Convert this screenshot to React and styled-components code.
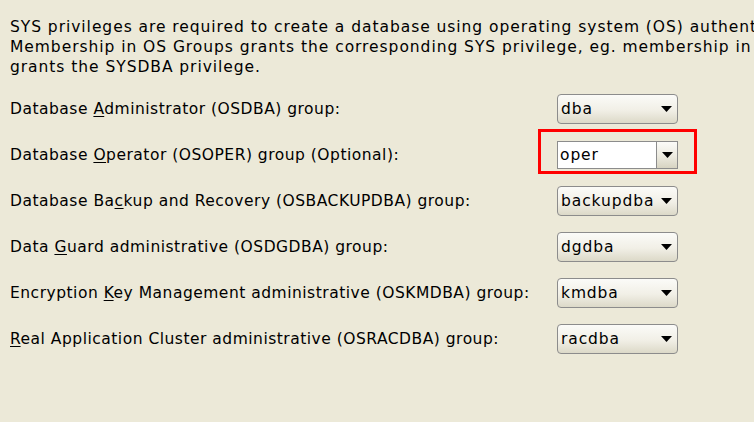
import React from "react";
import styled, { createGlobalStyle } from "styled-components";

const Global = createGlobalStyle`
  html, body {
    margin: 0;
    padding: 0;
    background: #ece9d8;
  }
  body {
    width: 754px;
    height: 422px;
    overflow: hidden;
    font-family: "DejaVu Sans", Verdana, sans-serif;
    font-size: 15.5px;
    color: #000;
  }
`;

const Page = styled.div`
  width: 754px;
  height: 422px;
  overflow: hidden;
  padding: 17px 0 0 10px;
  box-sizing: border-box;
`;

const Intro = styled.p`
  margin: 0 0 9px;
  white-space: nowrap;
  line-height: 20px;
  letter-spacing: 0.95px;
`;

const Form = styled.div`
  display: grid;
  grid-template-columns: 547px 121px;
  grid-auto-rows: 46px;
  align-items: center;
`;

const Label = styled.label`
  white-space: nowrap;
  letter-spacing: 0.5px;
  u { text-decoration: underline; text-underline-offset: 2px; }
`;

const Cell = styled.div`
  position: relative;
  width: 121px;
  height: 30px;
`;

const Highlight = styled.div`
  position: absolute;
  left: -19px;
  right: -19px;
  top: -11px;
  bottom: -4px;
  border: 3px solid #f00;
  box-sizing: border-box;
  pointer-events: none;
`;

const Combo = styled.div`
  display: flex;
  align-items: center;
  justify-content: space-between;
  height: 100%;
  box-sizing: border-box;
  border: 1px solid #8c8c8c;
  border-radius: 4px;
  background: linear-gradient(#fbfbf8, #f1efe6 55%, #dcd9c8);
  padding: 0 5px 0 3px;
  letter-spacing: 0.9px;
`;

const EditCombo = styled.div`
  display: flex;
  height: 28px;
  margin-top: 1px;
  box-sizing: border-box;
  border: 1px solid #8c8c8c;
`;

const Field = styled.div`
  flex: 1;
  background: #fff;
  display: flex;
  align-items: center;
  padding-left: 2px;
  letter-spacing: 0.9px;
  border-right: 1px solid #8c8c8c;
`;

const ArrowBtn = styled.div`
  width: 20px;
  display: flex;
  align-items: center;
  justify-content: center;
  background: linear-gradient(#fbfbf8, #eceadf 55%, #d7d4c2);
`;

const Arrow = () => (
  <svg width="11" height="6" viewBox="0 0 11 6">
    <path d="M0 0h11L5.5 6z" fill="#000" />
  </svg>
);

const rows = [
  { pre: "Database ", key: "A", post: "dministrator (OSDBA) group:", value: "dba" },
  { pre: "Database ", key: "O", post: "perator (OSOPER) group (Optional):", value: "oper", editable: true },
  { pre: "Database Ba", key: "c", post: "kup and Recovery (OSBACKUPDBA) group:", value: "backupdba" },
  { pre: "Data ", key: "G", post: "uard administrative (OSDGDBA) group:", value: "dgdba" },
  { pre: "Encryption ", key: "K", post: "ey Management administrative (OSKMDBA) group:", value: "kmdba" },
  { pre: "", key: "R", post: "eal Application Cluster administrative (OSRACDBA) group:", value: "racdba" },
];

export default function App() {
  return (
    <Page>
      <Global />
      <Intro>
        SYS privileges are required to create a database using operating system (OS) authentication.
        <br />
        Membership in OS Groups grants the corresponding SYS privilege, eg. membership in OSDBA
        <br />
        grants the SYSDBA privilege.
      </Intro>
      <Form>
        {rows.map((r) => (
          <React.Fragment key={r.value}>
            <Label>
              {r.pre}
              <u>{r.key}</u>
              {r.post}
            </Label>
            <Cell>
              {r.editable ? (
                <>
                  <EditCombo>
                    <Field>{r.value}</Field>
                    <ArrowBtn>
                      <Arrow />
                    </ArrowBtn>
                  </EditCombo>
                  <Highlight />
                </>
              ) : (
                <Combo>
                  <span>{r.value}</span>
                  <Arrow />
                </Combo>
              )}
            </Cell>
          </React.Fragment>
        ))}
      </Form>
    </Page>
  );
}
